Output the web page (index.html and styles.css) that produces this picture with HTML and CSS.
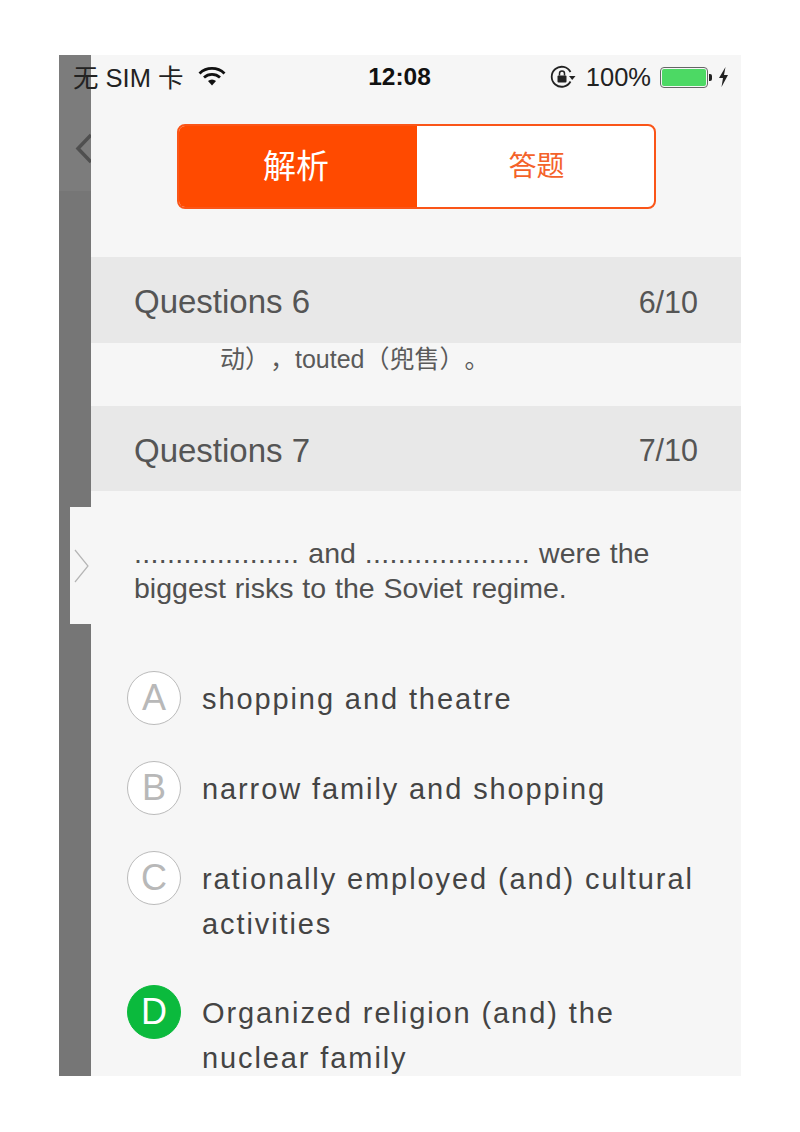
FILE: index.html
```html
<!DOCTYPE html>
<html lang="zh">
<head>
<meta charset="utf-8">
<title>Questions</title>
<link rel="stylesheet" href="styles.css">
</head>
<body>
<div class="phone">
  <aside class="strip">
    <div class="strip-top">
      <svg class="back" width="16" height="32" viewBox="0 0 16 32"><path d="M16 2 L3 15.500 L16 29" fill="none" stroke="#4f4f4f" stroke-width="3.500"/></svg>
    </div>
  </aside>
  <main class="main">
    <div class="tabs">
      <div class="tab tab-on">解析</div>
      <div class="tab tab-off">答题</div>
    </div>
    <div class="qhead"><span class="qtitle">Questions 6</span><span class="qnum">6/10</span></div>
    <p class="snippet">动），touted（兜售）。</p>
    <div class="qhead"><span class="qtitle">Questions 7</span><span class="qnum">7/10</span></div>
    <p class="stem"><span class="line"><span class="dots">....................</span> and <span class="dots">....................</span> were the</span><span class="line">biggest risks to the Soviet regime.</span></p>
    <ul class="options">
      <li class="option"><span class="badge">A</span><span class="otext">shopping and theatre</span></li>
      <li class="option"><span class="badge">B</span><span class="otext">narrow family and shopping</span></li>
      <li class="option"><span class="badge">C</span><span class="otext">rationally employed (and) cultural activities</span></li>
      <li class="option"><span class="badge badge-ok">D</span><span class="otext">Organized religion (and) the nuclear family</span></li>
    </ul>
  </main>
  <div class="statusbar">
    <div class="st-left">
      <span>无 SIM 卡</span>
      <svg width="28" height="20" viewBox="0 0 28 20"><path d="M1.500 7.500 A18 18 0 0 1 26.500 7.500" fill="none" stroke="#111" stroke-width="2.800"/><path d="M6 11.500 A12 12 0 0 1 22 11.500" fill="none" stroke="#111" stroke-width="2.800"/><path d="M10 15 L14 19.500 L18 15 A6 6 0 0 0 10 15 Z" fill="#111"/></svg>
    </div>
    <div class="st-time">12:08</div>
    <div class="st-right">
      <svg class="lock" width="26" height="24" viewBox="0 0 26 24"><path d="M20.500 16.500 A10 10 0 1 1 20.500 7" fill="none" stroke="#222" stroke-width="1.800"/><path d="M19 11 L25.500 11 L22.200 15 Z" fill="#222"/><rect x="7.500" y="10.500" width="9" height="7" rx="1" fill="#222"/><path d="M9.500 10.500 V8.500 A2.500 2.500 0 0 1 14.500 8.500 V10.500" fill="none" stroke="#222" stroke-width="1.500"/></svg>
      <span class="pct">100%</span>
      <span class="battery"><span class="battery-fill"></span></span>
      <span class="battery-tip"></span>
      <svg width="11" height="20" viewBox="0 0 11 20"><path d="M7.500 0 L1 11 H5 L3.500 20 L10 8 H6 Z" fill="#222"/></svg>
    </div>
  </div>
  <div class="handle">
    <svg width="16" height="36" viewBox="0 0 16 36"><path d="M1 2 L14 18 L1 34" fill="none" stroke="#b5b5b5" stroke-width="1.200"/></svg>
  </div>
</div>
</body>
</html>
```
FILE: styles.css
```css
* { box-sizing: border-box; }
html, body { margin: 0; padding: 0; background: #fff; }
body { font-family: "Liberation Sans", "Noto Sans CJK SC", sans-serif; color: #444; }
.phone { position: relative; display: flex; width: 682px; height: 1021px; margin: 55px 0 0 59px; overflow: hidden; background: #f6f6f6; }
.strip { flex: 0 0 32px; background: #767676; }
.strip-top { height: 136px; background: #7c7c7c; padding: 78px 0 0 16px; overflow: hidden; }
.back { display: block; }
.main { flex: 1; min-width: 0; background: #f6f6f6; padding-top: 69px; }
.tabs { display: flex; width: 479px; height: 85px; margin: 0 0 48px 86px; border: 2px solid #fa5518; border-radius: 8px; overflow: hidden; background: #fff; }
.tab { display: flex; align-items: center; justify-content: center; padding-bottom: 5px; }
.tab-on { flex: 0 0 238px; background: #ff4a00; color: #fff; font-size: 33px; padding-right: 4px; }
.tab-off { flex: 1; color: #f4622a; font-size: 28px; padding-left: 2px; }
.qhead { display: flex; justify-content: space-between; align-items: center; height: 85px; padding: 4px 43px 0; background: #e8e8e8; }
.tabs + .qhead { height: 86px; }
.qtitle { font-size: 33px; color: #555; }
.qnum { font-size: 30.500px; color: #555; }
.snippet { margin: 0; height: 63px; padding: 0 0 0 129px; font-size: 25px; line-height: 32px; color: #5a5a5a; text-spacing-trim: space-all; }
.stem { margin: 0; padding: 45px 40px 0 43px; font-size: 28.500px; word-spacing: 1px; line-height: 35px; color: #505050; height: 154px; }
.line { display: block; }
.dots { letter-spacing: 0.350px; }
.options { list-style: none; margin: 0; padding: 26px 40px 0 36px; }
.option { display: flex; gap: 21px; margin-bottom: 36px; }
.badge { flex: 0 0 54px; height: 54px; display: flex; align-items: center; justify-content: center; border: 1px solid #bbb; border-radius: 50%; background: #fff; color: #b8b8b8; font-size: 36px; }
.badge-ok { background: #0bba3d; border-color: #0bba3d; color: #fff; }
.otext { flex: 1; font-size: 29px; line-height: 45px; letter-spacing: 1.900px; color: #444; padding: 6px 0 2px; }
.statusbar { position: absolute; left: 14px; right: 12px; top: 0; height: 44px; display: grid; grid-template-columns: 1fr auto 1fr; align-items: center; color: #222; font-size: 25.500px; }
.st-left { display: flex; align-items: center; gap: 14px; padding-bottom: 3px; }
.st-time { font-weight: 700; font-size: 24.500px; color: #111; padding: 0 3px 0 0; }
.st-right { display: flex; align-items: center; justify-content: flex-end; }
.lock { margin-right: 10px; }
.pct { font-size: 25.500px; margin-right: 9px; }
.battery { display: block; width: 48px; height: 21px; border: 1.500px solid #666; border-radius: 4px; padding: 1px; margin-right: 1px; }
.battery-fill { display: block; height: 100%; background: #4cd964; border-radius: 2px; }
.battery-tip { display: block; width: 3px; height: 7px; background: #222; margin-right: 6px; border-radius: 0 2px 2px 0; }
.handle { position: absolute; left: 11px; top: 452px; width: 21px; height: 117px; background: #f6f6f6; display: flex; align-items: center; padding-left: 4px; }
```
